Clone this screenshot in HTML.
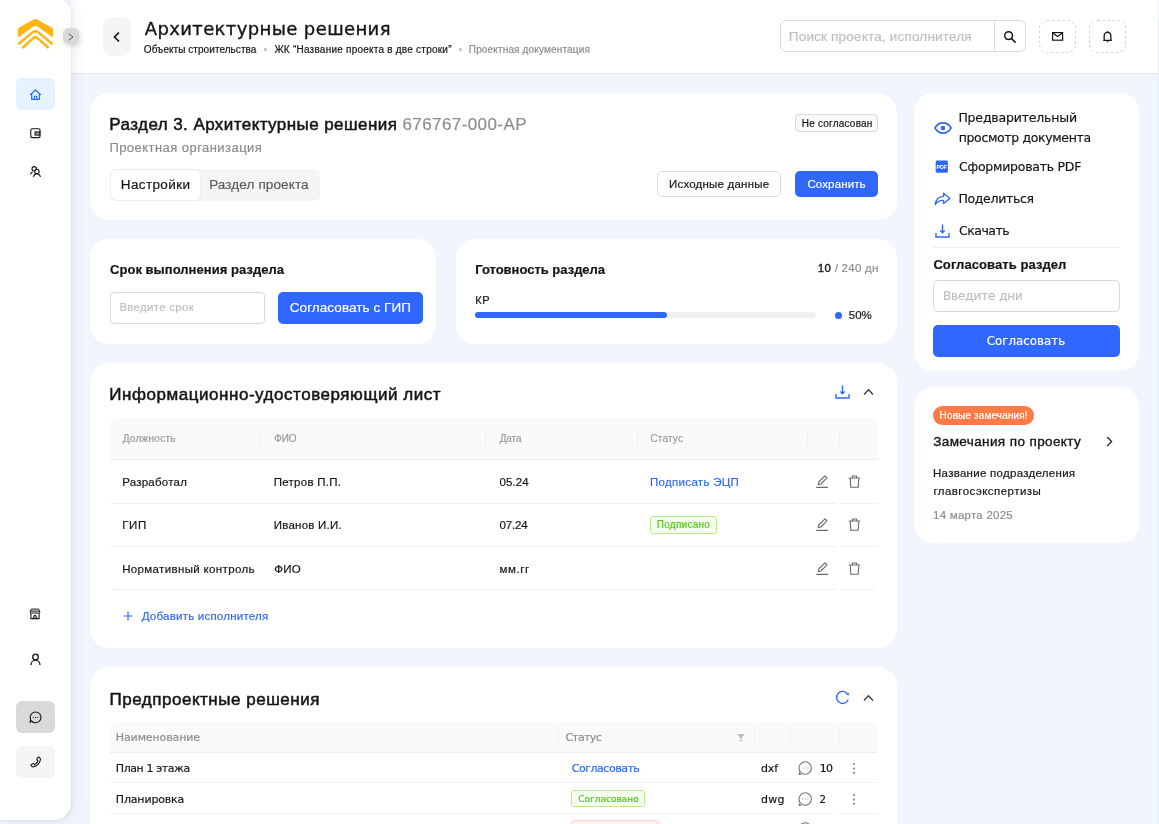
<!DOCTYPE html>
<html lang="ru">
<head>
<meta charset="utf-8">
<title>Архитектурные решения</title>
<style>
*{box-sizing:border-box;margin:0;padding:0}
html,body{width:1159px;height:824px;overflow:hidden}
body{background:#f0f5fe;font-family:"Liberation Sans",sans-serif;color:#141414;position:relative;-webkit-font-smoothing:antialiased}
.a{position:absolute}
.t{position:absolute;white-space:nowrap;line-height:1;-webkit-text-stroke:0.18px currentColor}
.m{-webkit-text-stroke:0.35px currentColor}
.card{position:absolute;background:#fff;border-radius:19px}
.blue{color:#2d67fa}
.gray{color:#8c8c8c}
.btn{position:absolute;border-radius:4px;text-align:center;white-space:nowrap}
.btn.p{background:#3068ff;color:#fff}
.btn.d{background:#fff;border:1px solid #d9d9d9;color:#141414}
svg{position:absolute;overflow:visible}
.dv{font-family:"DejaVu Sans","Liberation Sans",sans-serif}
</style>
</head>
<body>
<div id="root" style="position:absolute;left:0;top:0;width:1159px;height:824px;overflow:hidden;will-change:transform">

<!-- HEADER -->
<div class="a" id="header" style="left:71px;top:0;width:1087px;height:74px;background:#fff;border-bottom:1px solid #e9e9ec"></div>
<div class="a" style="left:103px;top:17.4px;width:27.6px;height:38.6px;background:#f5f5f5;border-radius:9px"></div>
<svg style="left:112px;top:31px" width="10" height="12" viewBox="0 0 10 12"><path d="M7 1.5 L2.5 6 L7 10.5" fill="none" stroke="#141414" stroke-width="1.7"/></svg>
<div class="t m dv" id="h-title" style="left:144.7px;top:16.8px;font-size:18px;line-height:24px;letter-spacing:0.38px">Архитектурные решения</div>
<div class="t" id="bc1" style="left:143.8px;top:43.5px;font-size:10px;line-height:12px;letter-spacing:0.06px">Объекты строительства</div>
<div class="a" style="left:264px;top:48px;width:3px;height:3px;border-radius:1px;background:#c4c4c4"></div>
<div class="t" id="bc2" style="left:274.4px;top:43.5px;font-size:10px;line-height:12px;letter-spacing:0.23px">ЖК “Название проекта в две строки”</div>
<div class="a" style="left:458.5px;top:48px;width:3px;height:3px;border-radius:1px;background:#c4c4c4"></div>
<div class="t gray" id="bc3" style="left:468.8px;top:43.5px;font-size:10px;line-height:12px;letter-spacing:0.16px">Проектная документация</div>

<!-- search -->
<div class="a" style="left:780px;top:20px;width:246px;height:32px;border:1px solid #d9d9d9;border-radius:6px;background:#fff"></div>
<div class="a" style="left:994px;top:21px;width:1px;height:30px;background:#d9d9d9"></div>
<div class="t" id="srch" style="left:788.8px;top:29px;font-size:13.5px;line-height:16px;color:#bfbfbf;letter-spacing:0.19px">Поиск проекта, исполнителя</div>
<svg style="left:1003px;top:30px" width="14" height="14" viewBox="0 0 14 14"><circle cx="5.6" cy="5.6" r="3.9" fill="none" stroke="#141414" stroke-width="1.5"/><path d="M8.5 8.5 L12.6 12.6" stroke="#141414" stroke-width="1.6"/></svg>
<!-- mail / bell -->
<svg style="left:1039px;top:20px" width="37" height="33"><rect x="0.5" y="0.5" width="36" height="32" rx="8" fill="#fff" stroke="#cfcfcf" stroke-dasharray="2.4 2.6"/></svg>
<svg style="left:1052px;top:32px" width="12" height="9" viewBox="0 0 12 9"><rect x="0.6" y="0.6" width="10" height="7.6" fill="none" stroke="#141414" stroke-width="1.2"/><path d="M0.8 0.9 L5.6 4.6 L10.4 0.9" fill="none" stroke="#141414" stroke-width="1.2"/></svg>
<svg style="left:1089px;top:20px" width="37" height="33"><rect x="0.5" y="0.5" width="36" height="32" rx="8" fill="#fff" stroke="#cfcfcf" stroke-dasharray="2.4 2.6"/></svg>
<svg style="left:1101px;top:29.8px" width="13" height="14" viewBox="0 0 13 14"><path d="M3.2 10.2 V5.6 a3.3 3.3 0 0 1 6.6 0 V10.2 M2.2 10.4 H10.8" fill="none" stroke="#141414" stroke-width="1.3"/><path d="M5.3 11.3 h2.4 l-1.2 1.2z" fill="#141414"/><circle cx="6.5" cy="1.9" r="0.8" fill="#141414"/></svg>

<!-- SIDEBAR -->
<div class="a" id="sidebar" style="left:0;top:-1.5px;width:71px;height:821.5px;background:#fff;border-radius:0 13.5px 17px 0;box-shadow:0.5px 1px 3px rgba(0,0,0,0.07),3px 1px 15px rgba(20,30,60,0.065)"></div>
<div class="a" style="left:64px;top:0;width:8px;height:5px;background:#f0f5fe;border-radius:0 0 0 8px;display:none"></div>
<!-- logo -->
<svg style="left:0;top:0" width="71" height="60" viewBox="0 0 71 60"><path d="M33.5 19.5 Q35.4 18.3 37.3 19.5 L51.7 27.5 Q53 28.3 53 29.8 V35.8 Q53 37.8 51.4 36.6 L38.4 27.2 Q35.4 25 32.4 27.2 L19.4 36.6 Q17.8 37.8 17.8 35.8 V29.8 Q17.8 28.3 19.1 27.5 Z" fill="#fdb515"/><path d="M19 43.5 L32.6 32.4 Q35.4 30.1 38.2 32.4 L51.8 43.5" fill="none" stroke="#fdb515" stroke-width="2.5" stroke-linecap="round" stroke-linejoin="round"/><path d="M23 47.3 L33 38.4 Q35.4 36.3 37.8 38.4 L47.8 47.3" fill="none" stroke="#fdb515" stroke-width="2.5" stroke-linecap="round" stroke-linejoin="round"/></svg>
<!-- collapse toggle -->
<div class="a" style="left:63px;top:28.3px;width:15.8px;height:16px;border-radius:5.5px;background:#d9d9d9;box-shadow:1px 2px 5px rgba(0,0,0,0.14)"></div>
<svg style="left:68px;top:32.5px" width="6" height="8" viewBox="0 0 6 8"><path d="M0.6 0.7 L5 4 L0.6 7.3" fill="none" stroke="#4a4a4a" stroke-width="0.95"/></svg>
<!-- nav -->
<div class="a" style="left:16px;top:78px;width:39px;height:32px;background:#e6f2ff;border-radius:6px"></div>
<svg style="left:29px;top:88px" width="13" height="13" viewBox="0 0 13 13"><path d="M1.6 6.5 L6.5 2 L11.4 6.5 M2.7 5.8 V11.3 H10.3 V5.8" fill="none" stroke="#1d6bff" stroke-width="1.2" stroke-linejoin="round" stroke-linecap="round"/><path d="M5.3 11.3 V9.2 a1.2 1.2 0 0 1 2.4 0 V11.3" fill="none" stroke="#1d6bff" stroke-width="1.1"/></svg>
<svg style="left:30px;top:127.9px" width="11" height="11" viewBox="0 0 11 11"><rect x="0.8" y="0.8" width="9.2" height="8.8" rx="1.3" fill="none" stroke="#141414" stroke-width="1.1"/><rect x="5" y="3.9" width="4.8" height="3.2" fill="#9a9a9a" stroke="#141414" stroke-width="1"/></svg>
<svg style="left:29px;top:165px" width="13" height="13" viewBox="0 0 13 13"><circle cx="5.2" cy="3.8" r="2.2" fill="none" stroke="#141414" stroke-width="1.1"/><path d="M1.3 9.3 L3.5 6.7" fill="none" stroke="#141414" stroke-width="1.1"/><circle cx="7.9" cy="6.4" r="2.2" fill="#fff" stroke="#141414" stroke-width="1.1"/><path d="M4.3 11.8 C5 9.6 6.4 8.7 7.9 8.7 C9.4 8.7 10.8 9.6 11.5 11.8" fill="none" stroke="#141414" stroke-width="1.1"/></svg>
<svg style="left:29.4px;top:608.4px" width="12" height="12" viewBox="0 0 12 12"><path d="M2.3 1.1 H9.7 L10.9 3.9 Q10.9 5 9.8 5 H2.2 Q1.1 5 1.1 3.9 Z M1.4 3.1 H10.6" fill="none" stroke="#141414" stroke-width="1" stroke-linejoin="round"/><path d="M1.9 5 V10.6 H10.1 V5" fill="none" stroke="#141414" stroke-width="1.05" stroke-linejoin="round"/><path d="M4 10.6 L5 7.4 H7 L8 10.6 M6 7.4 V10.4" fill="none" stroke="#141414" stroke-width="0.9"/></svg>
<svg style="left:30px;top:653px" width="11" height="13" viewBox="0 0 11 13"><circle cx="5.5" cy="4" r="2.8" fill="none" stroke="#141414" stroke-width="1.3"/><path d="M1 12 a4.5 4.8 0 0 1 9 0" fill="none" stroke="#141414" stroke-width="1.3"/></svg>
<div class="a" style="left:16px;top:701px;width:39px;height:32px;background:#d9d9d9;border-radius:6px"></div>
<svg style="left:29px;top:711px" width="13" height="13" viewBox="0 0 13 13"><path d="M6.6 1 a5.4 5.4 0 1 1 -4.2 8.8 L1 11.8 L1.6 8.6 A5.4 5.4 0 0 1 6.6 1 Z" fill="none" stroke="#141414" stroke-width="1.1"/><circle cx="4.4" cy="6.5" r="0.6" fill="#141414"/><circle cx="6.6" cy="6.5" r="0.6" fill="#141414"/><circle cx="8.8" cy="6.5" r="0.6" fill="#141414"/></svg>
<div class="a" style="left:16px;top:746px;width:39px;height:32px;background:#f5f5f5;border-radius:6px"></div>
<svg style="left:30px;top:756px" width="12" height="12" viewBox="0 0 12 12"><path d="M8.2 1 C10 1.4 10.8 3 10.2 4.6 C9 8 6.6 10.2 3.6 10.8 C2 11 1 10 1 8.8 L3.4 7.6 L4.6 8.6 C6.2 7.8 7.4 6.4 8 4.8 L6.8 3.6 Z" fill="none" stroke="#141414" stroke-width="1.1" stroke-linejoin="round"/></svg>


<!-- CARD 1 -->
<div class="card" style="left:90px;top:93px;width:807px;height:127px"></div>
<div class="t m" id="c1t" style="left:109.3px;top:114px;font-size:17px;line-height:22px;letter-spacing:0.43px;-webkit-text-stroke:0.5px currentColor">Раздел 3. Архитектурные решения</div>
<div class="t gray" id="c1n" style="left:402.4px;top:114px;font-size:17px;line-height:22px;letter-spacing:0.42px">676767-000-АР</div>
<div class="t gray" id="c1s" style="left:109.4px;top:139.5px;font-size:13px;line-height:16px;letter-spacing:0.45px">Проектная организация</div>
<div class="a" style="left:110px;top:169px;width:210px;height:32px;background:#f5f5f5;border-radius:6px"></div>
<div class="a" style="left:111px;top:170px;width:89px;height:30px;background:#fff;border-radius:5px;box-shadow:0 0 2px rgba(0,0,0,0.12)"></div>
<div class="t" id="tab1" style="left:120.8px;top:177px;font-size:13.5px;line-height:16px;letter-spacing:0.37px">Настройки</div>
<div class="t" id="tab2" style="left:209.2px;top:177px;font-size:13.5px;line-height:16px;letter-spacing:0.12px;color:#595959">Раздел проекта</div>
<div class="a" style="left:795px;top:114px;width:83px;height:18px;border:1px solid #d9d9d9;border-radius:4px;background:#fafafa"></div>
<div class="t" id="tag1" style="left:801.8px;top:118px;font-size:10px;line-height:12px;letter-spacing:0.21px">Не согласован</div>
<div class="btn d" style="left:657px;top:171px;width:124px;height:26px;border-radius:5px"></div>
<div class="t" id="b1" style="left:669px;top:177px;font-size:11.5px;line-height:14px;letter-spacing:0.21px">Исходные данные</div>
<div class="btn p" style="left:795px;top:171px;width:83px;height:26px;border-radius:5px"></div>
<div class="t" id="b2" style="left:807.4px;top:177px;font-size:11.5px;line-height:14px;letter-spacing:0.13px;color:#fff">Сохранить</div>

<!-- CARD 2 -->
<div class="card" style="left:90px;top:239px;width:346px;height:105px"></div>
<div class="t" id="c2t" style="left:110px;top:262px;font-size:13px;line-height:16px;font-weight:bold;letter-spacing:0.04px">Срок выполнения раздела</div>
<div class="a" style="left:110px;top:292px;width:155px;height:32px;border:1px solid #d9d9d9;border-radius:4px;background:#fff"></div>
<div class="t" id="c2p" style="left:119.4px;top:300px;font-size:11.5px;line-height:14px;color:#bfbfbf;letter-spacing:0.28px">Введите срок</div>
<div class="btn p" style="left:278px;top:292px;width:145px;height:32px;border-radius:5px"></div>
<div class="t" id="c2b" style="left:289.8px;top:300px;font-size:13.5px;line-height:16px;color:#fff;letter-spacing:0.06px">Согласовать с ГИП</div>

<!-- CARD 3 -->
<div class="card" style="left:456px;top:239px;width:441px;height:105px"></div>
<div class="t" id="c3t" style="left:475.2px;top:262px;font-size:13px;line-height:16px;font-weight:bold;letter-spacing:-0.01px">Готовность раздела</div>
<div class="t" id="c3r" style="left:817.8px;top:261px;font-size:11.5px;line-height:14px;letter-spacing:0.28px"><span class="m">10</span> <span class="gray">/ 240 дн</span></div>
<div class="t" id="c3k" style="left:475.3px;top:293.5px;font-size:11px;line-height:12px;letter-spacing:0.66px">КР</div>
<div class="a" style="left:475px;top:312px;width:341px;height:6px;border-radius:3px;background:#f0f0f0"></div>
<div class="a" style="left:475px;top:312px;width:192px;height:6px;border-radius:3px;background:#3068ff"></div>
<div class="a" style="left:835px;top:311.5px;width:7px;height:7px;border-radius:4px;background:#3068ff"></div>
<div class="t" id="c3p" style="left:848.8px;top:308px;font-size:11.5px;line-height:14px;letter-spacing:-0.06px">50%</div>


<!-- CARD 4 -->
<div class="card" style="left:90px;top:363px;width:807px;height:285px"></div>
<div class="t m" id="c4t" style="left:109.3px;top:384px;font-size:17px;line-height:22px;letter-spacing:0.54px;-webkit-text-stroke:0.5px currentColor">Информационно-удостоверяющий лист</div>
<svg style="left:835px;top:385px" width="15" height="14" viewBox="0 0 15 14"><path d="M7.5 0.4 V8.6 M5.3 6.6 L7.5 8.8 L9.7 6.6 M1 9 V13 H14 V9" fill="none" stroke="#2d67fa" stroke-width="1.4"/></svg>
<svg style="left:863px;top:388px" width="11" height="8" viewBox="0 0 11 8"><path d="M1 6.5 L5.5 1.8 L10 6.5" fill="none" stroke="#3a3a3a" stroke-width="1.3"/></svg>
<div class="a" style="left:110px;top:418px;width:768px;height:42px;background:#fafafa;border-radius:6px 6px 0 0;border-bottom:1px solid #ededed"></div>
<div class="a" style="left:260px;top:430px;width:1px;height:17px;background:#f0f0f0"></div>
<div class="a" style="left:485px;top:430px;width:1px;height:17px;background:#f0f0f0"></div>
<div class="a" style="left:637px;top:430px;width:1px;height:17px;background:#f0f0f0"></div>
<div class="a" style="left:807px;top:430px;width:1px;height:17px;background:#f0f0f0"></div>
<div class="a" style="left:839px;top:430px;width:1px;height:17px;background:#f0f0f0"></div>
<div class="t gray" id="th1" style="left:122.7px;top:433px;font-size:10px;line-height:12px;letter-spacing:0.27px;color:#9a9a9a">Должность</div>
<div class="t gray" id="th2" style="left:274.2px;top:433px;font-size:10px;line-height:12px;letter-spacing:-0.11px;color:#9a9a9a">ФИО</div>
<div class="t gray" id="th3" style="left:499.7px;top:433px;font-size:10px;line-height:12px;letter-spacing:-0.13px;color:#9a9a9a">Дата</div>
<div class="t gray" id="th4" style="left:650.4px;top:433px;font-size:10px;line-height:12px;letter-spacing:0.19px;color:#9a9a9a">Статус</div>
<div class="a" style="left:110px;top:503px;width:768px;height:1px;background:#f0f0f0"></div>
<div class="t" id="r1a" style="left:122.2px;top:475px;font-size:11.5px;line-height:14px;letter-spacing:0.23px">Разработал</div>
<div class="t" id="r1b" style="left:273.8px;top:475px;font-size:11.5px;line-height:14px;letter-spacing:0.26px">Петров П.П.</div>
<div class="t" id="r1c" style="left:499.6px;top:475px;font-size:11.5px;line-height:14px;letter-spacing:0.09px">05.24</div>
<svg style="left:815px;top:475px" width="14" height="14" viewBox="0 0 14 14"><path d="M1.2 12.4 H13 M3.2 9.6 L3.8 7 L10 0.9 L12 2.9 L5.8 9 Z" fill="none" stroke="#6b6b6b" stroke-width="1.1" stroke-linejoin="round"/></svg>
<svg style="left:847.6px;top:475px" width="13" height="14" viewBox="0 0 13 14"><path d="M0.8 3 H12.2 M2.2 3 L2.8 12.2 H10.2 L10.8 3 M4.4 2.8 V1 H8.6 V2.8" fill="none" stroke="#6b6b6b" stroke-width="1.1" stroke-linejoin="round"/></svg>
<div class="a" style="left:110px;top:546px;width:768px;height:1px;background:#f0f0f0"></div>
<div class="t" id="r2a" style="left:122.2px;top:518px;font-size:11.5px;line-height:14px;letter-spacing:0.61px">ГИП</div>
<div class="t" id="r2b" style="left:273.8px;top:518px;font-size:11.5px;line-height:14px;letter-spacing:0.22px">Иванов И.И.</div>
<div class="t" id="r2c" style="left:499.6px;top:518px;font-size:11.5px;line-height:14px;letter-spacing:-0.19px">07.24</div>
<svg style="left:815px;top:518px" width="14" height="14" viewBox="0 0 14 14"><path d="M1.2 12.4 H13 M3.2 9.6 L3.8 7 L10 0.9 L12 2.9 L5.8 9 Z" fill="none" stroke="#6b6b6b" stroke-width="1.1" stroke-linejoin="round"/></svg>
<svg style="left:847.6px;top:518px" width="13" height="14" viewBox="0 0 13 14"><path d="M0.8 3 H12.2 M2.2 3 L2.8 12.2 H10.2 L10.8 3 M4.4 2.8 V1 H8.6 V2.8" fill="none" stroke="#6b6b6b" stroke-width="1.1" stroke-linejoin="round"/></svg>
<div class="a" style="left:113px;top:589px;width:762px;height:1px;background:#f0f0f0"></div>
<div class="t" id="r3a" style="left:122.2px;top:562px;font-size:11.5px;line-height:14px;letter-spacing:0.35px">Нормативный контроль</div>
<div class="t" id="r3b" style="left:274.2px;top:562px;font-size:11.5px;line-height:14px;letter-spacing:0.26px">ФИО</div>
<div class="t" id="r3c" style="left:499.4px;top:562px;font-size:11.5px;line-height:14px;letter-spacing:0.62px">мм.гг</div>
<svg style="left:815px;top:562px" width="14" height="14" viewBox="0 0 14 14"><path d="M1.2 12.4 H13 M3.2 9.6 L3.8 7 L10 0.9 L12 2.9 L5.8 9 Z" fill="none" stroke="#6b6b6b" stroke-width="1.1" stroke-linejoin="round"/></svg>
<svg style="left:847.6px;top:562px" width="13" height="14" viewBox="0 0 13 14"><path d="M0.8 3 H12.2 M2.2 3 L2.8 12.2 H10.2 L10.8 3 M4.4 2.8 V1 H8.6 V2.8" fill="none" stroke="#6b6b6b" stroke-width="1.1" stroke-linejoin="round"/></svg>
<div class="t blue" id="st1" style="left:650px;top:475px;font-size:11.5px;line-height:14px;letter-spacing:0.31px">Подписать ЭЦП</div>
<div class="a" style="left:650px;top:516px;width:67px;height:18px;border:1px solid #b7eb8f;border-radius:3px;background:#f6ffed"></div>
<div class="t" id="st2" style="left:656.8px;top:519px;font-size:10px;line-height:12px;letter-spacing:0.26px;color:#52c41a">Подписано</div>
<div class="a" style="left:836px;top:460px;width:4px;height:131px;background:#fff"></div>
<svg style="left:123px;top:611px" width="10" height="10" viewBox="0 0 10 10"><path d="M5 0.5 V9.5 M0.5 5 H9.5" stroke="#2d67fa" stroke-width="1.2"/></svg>
<div class="t blue" id="add" style="left:141.7px;top:609px;font-size:11.5px;line-height:14px;letter-spacing:0.23px">Добавить исполнителя</div>


<!-- CARD 5 -->
<div class="card" style="left:90px;top:667px;width:807px;height:200px"></div>
<div class="t m" id="c5t" style="left:109.5px;top:689px;font-size:17px;line-height:22px;letter-spacing:0.52px;-webkit-text-stroke:0.5px currentColor">Предпроектные решения</div>
<svg style="left:835px;top:690px" width="15" height="15" viewBox="0 0 15 15"><path d="M12.33 3.71 A6 6 0 1 0 13.16 9.65" fill="none" stroke="#2d67fa" stroke-width="1.4"/><path d="M11.2 4.7 L13.9 2.4 L13.8 5.6 Z" fill="#2d67fa"/></svg>
<svg style="left:863px;top:694px" width="11" height="8" viewBox="0 0 11 8"><path d="M1 6.5 L5.5 1.8 L10 6.5" fill="none" stroke="#3a3a3a" stroke-width="1.3"/></svg>
<div class="a" style="left:110px;top:722px;width:768px;height:31px;background:#fafafa;border-radius:6px 6px 0 0;border-bottom:1px solid #ededed"></div>
<div class="a" style="left:558px;top:727px;width:1px;height:19px;background:#f2f2f2"></div>
<div class="a" style="left:754px;top:727px;width:1px;height:19px;background:#f2f2f2"></div>
<div class="a" style="left:790px;top:727px;width:1px;height:19px;background:#f2f2f2"></div>
<div class="a" style="left:839px;top:727px;width:1px;height:19px;background:#f2f2f2"></div>
<div class="t dv gray" id="ph1" style="left:115.8px;top:731px;font-size:11px;line-height:14px;letter-spacing:-0.11px">Наименование</div>
<div class="t dv gray" id="ph2" style="left:565.4px;top:731px;font-size:11px;line-height:14px;letter-spacing:-0.7px">Статус</div>
<svg style="left:736.6px;top:733.8px" width="7.8" height="7.2" viewBox="0 0 7.8 7.2"><path d="M0 0 H7.8 L4.9 3.4 V5 H2.9 V3.4 Z M2.4 5.9 H5.4 V7.2 H2.4Z" fill="#bdbdbd"/></svg>
<div class="a" style="left:110px;top:782px;width:768px;height:1px;background:#f0f0f0"></div>
<div class="t dv" id="p1a" style="left:115.8px;top:762px;font-size:11px;line-height:14px;letter-spacing:-0.41px">План 1 этажа</div>
<div class="t dv" id="p1e" style="left:761.1px;top:762px;font-size:11px;line-height:14px;letter-spacing:-0.23px">dxf</div>
<svg style="left:797.6px;top:761px" width="14.4" height="14.4" viewBox="0 0 14.4 14.4"><circle cx="7.2" cy="7" r="6.2" fill="none" stroke="#737373" stroke-width="1.1"/><path d="M2.3 10.8 L1 13.6 L4.6 12.6" fill="#fff" stroke="#737373" stroke-width="1.1" stroke-linejoin="round"/><circle cx="4.6" cy="7" r="0.6" fill="#8c8c8c"/><circle cx="7.2" cy="7" r="0.6" fill="#8c8c8c"/><circle cx="9.8" cy="7" r="0.6" fill="#8c8c8c"/></svg>
<div class="t dv" id="p1n" style="left:819.8px;top:762px;font-size:11px;line-height:14px;letter-spacing:-0.84px">10</div>
<div class="a" style="left:852.8px;top:762.7px;width:2px;height:2px;background:#7a7a7a;border-radius:1px;box-shadow:0 4.4px 0 #7a7a7a,0 8.8px 0 #7a7a7a"></div>
<div class="a" style="left:110px;top:813px;width:768px;height:1px;background:#f0f0f0"></div>
<div class="t dv" id="p2a" style="left:115.8px;top:793px;font-size:11px;line-height:14px;letter-spacing:-0.16px">Планировка</div>
<div class="t dv" id="p2e" style="left:761.1px;top:793px;font-size:11px;line-height:14px;letter-spacing:0.19px">dwg</div>
<svg style="left:797.6px;top:792px" width="14.4" height="14.4" viewBox="0 0 14.4 14.4"><circle cx="7.2" cy="7" r="6.2" fill="none" stroke="#737373" stroke-width="1.1"/><path d="M2.3 10.8 L1 13.6 L4.6 12.6" fill="#fff" stroke="#737373" stroke-width="1.1" stroke-linejoin="round"/><circle cx="4.6" cy="7" r="0.6" fill="#8c8c8c"/><circle cx="7.2" cy="7" r="0.6" fill="#8c8c8c"/><circle cx="9.8" cy="7" r="0.6" fill="#8c8c8c"/></svg>
<div class="t dv" id="p2n" style="left:819.6px;top:793px;font-size:10.2px;line-height:14px;letter-spacing:0px">2</div>
<div class="a" style="left:852.8px;top:793.7px;width:2px;height:2px;background:#7a7a7a;border-radius:1px;box-shadow:0 4.4px 0 #7a7a7a,0 8.8px 0 #7a7a7a"></div>
<div class="t dv blue" id="ps1" style="left:571.8px;top:762px;font-size:11px;line-height:14px;letter-spacing:-0.48px">Согласовать</div>
<div class="a" style="left:571px;top:790px;width:74px;height:17px;border:1px solid #b7eb8f;border-radius:3px;background:#f6ffed"></div>
<div class="t dv" id="ps2" style="left:578.2px;top:793px;font-size:9px;line-height:12px;color:#52c41a;letter-spacing:-0px">Согласовано</div>
<div class="a" style="left:571px;top:820px;width:88px;height:17px;border:1px solid #ffccc7;border-radius:3px;background:#fff1f0"></div>
<svg style="left:797.6px;top:822px" width="14.4" height="14.4" viewBox="0 0 14.4 14.4"><circle cx="7.2" cy="7" r="6.2" fill="none" stroke="#737373" stroke-width="1.1"/></svg>

<div class="a" style="left:833px;top:812px;width:6.5px;height:3px;background:#fff"></div>
<!-- RIGHT CARD 1 -->
<div class="card" style="left:914px;top:93px;width:225px;height:278px"></div>
<svg style="left:933.5px;top:122.3px" width="18" height="12" viewBox="0 0 18 12"><path d="M0.9 6 C3.2 2.2 5.8 0.9 9 0.9 C12.2 0.9 14.8 2.2 17.1 6 C14.8 9.8 12.2 11.1 9 11.1 C5.8 11.1 3.2 9.8 0.9 6 Z" fill="none" stroke="#2d67fa" stroke-width="1.6"/><circle cx="9" cy="6" r="2.2" fill="#2d67fa"/></svg>
<div class="t dv" id="ra1a" style="left:958.4px;top:109px;font-size:12.5px;line-height:18px;letter-spacing:-0.18px">Предварительный</div>
<div class="t dv" id="ra1b" style="left:958.7px;top:128.5px;font-size:12.5px;line-height:18px;letter-spacing:-0.35px">просмотр документа</div>
<svg style="left:935.4px;top:160px" width="13.6" height="13.2" viewBox="0 0 14 14"><rect x="0.5" y="0.5" width="13" height="13" rx="1.5" fill="#2d67fa"/><text x="7" y="9.6" font-family="Liberation Sans, sans-serif" font-size="5.6" font-weight="bold" fill="#fff" text-anchor="middle">PDF</text></svg>
<div class="t dv" id="ra2" style="left:959px;top:158px;font-size:12.5px;line-height:18px;letter-spacing:-0.25px">Сформировать PDF</div>
<svg style="left:934px;top:192px" width="17" height="14" viewBox="0 0 17 14"><path d="M9.6 1.2 L15.8 6.4 L9.6 11.6 V8.4 C5.6 8.2 3 9.6 1.2 12.6 C1.8 7.6 4.8 4.6 9.6 4.4 Z" fill="none" stroke="#2d67fa" stroke-width="1.3" stroke-linejoin="round"/></svg>
<div class="t dv" id="ra3" style="left:958.4px;top:190px;font-size:12.5px;line-height:18px;letter-spacing:-0.32px">Поделиться</div>
<svg style="left:935px;top:224px" width="15" height="14" viewBox="0 0 15 14"><path d="M7.5 0.4 V8.6 M5.3 6.6 L7.5 8.8 L9.7 6.6 M1 9 V13 H14 V9" fill="none" stroke="#2d67fa" stroke-width="1.4"/></svg>
<div class="t dv" id="ra4" style="left:959px;top:222px;font-size:12.5px;line-height:18px;letter-spacing:-0.51px">Скачать</div>
<div class="a" style="left:933px;top:247px;width:187px;height:1px;background:#f0f0f0"></div>
<div class="t" id="rt" style="left:933.4px;top:257px;font-size:13px;line-height:16px;font-weight:bold;letter-spacing:0.08px">Согласовать раздел</div>
<div class="a" style="left:933px;top:280px;width:187px;height:32px;border:1px solid #d9d9d9;border-radius:5px;background:#fff"></div>
<div class="t dv" id="rp" style="left:942.9px;top:288px;font-size:12px;line-height:16px;color:#bfbfbf;letter-spacing:-0.09px">Введите дни</div>
<div class="btn p" style="left:933px;top:325px;width:187px;height:32px;border-radius:5px"></div>
<div class="t dv" id="rb" style="left:986.8px;top:333px;font-size:11.8px;line-height:16px;color:#fff;letter-spacing:0.02px">Согласовать</div>

<!-- RIGHT CARD 2 -->
<div class="card" style="left:914px;top:387px;width:225px;height:156px"></div>
<div class="a" style="left:933px;top:406px;width:101px;height:19px;border-radius:10px;background:#ff7a45"></div>
<div class="t" id="rn" style="left:939.6px;top:410px;font-size:10px;line-height:12px;color:#fff;letter-spacing:0.14px">Новые замечания!</div>
<div class="t m" id="r2t" style="left:933.2px;top:434px;font-size:13.5px;line-height:16px;letter-spacing:0.39px">Замечания по проекту</div>
<svg style="left:1106px;top:436px" width="7" height="11" viewBox="0 0 7 11"><path d="M1.2 1 L5.6 5.5 L1.2 10" fill="none" stroke="#262626" stroke-width="1.3"/></svg>
<div class="t" id="r2da" style="left:933px;top:466px;font-size:11.5px;line-height:14px;letter-spacing:0.28px">Название подразделения</div>
<div class="t" id="r2db" style="left:933.4px;top:484px;font-size:11.5px;line-height:14px;letter-spacing:0.45px">главгосэкспертизы</div>
<div class="t gray" id="r2e" style="left:933.1px;top:508px;font-size:11.5px;line-height:14px;letter-spacing:0.24px">14 марта 2025</div>
<div class="a" style="left:1158px;top:20px;width:1px;height:804px;background:#e4ebfa"></div>




</div>
</body>
</html>
